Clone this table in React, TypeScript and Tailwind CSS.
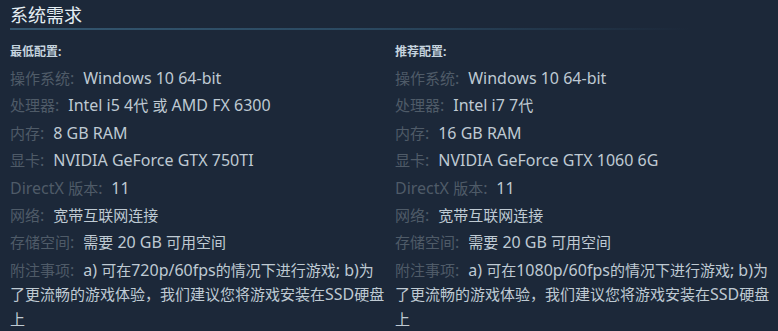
const minimum = [
  ["操作系统:", "Windows 10 64-bit"],
  ["处理器:", "Intel i5 4代 或 AMD FX 6300"],
  ["内存:", "8 GB RAM"],
  ["显卡:", "NVIDIA GeForce GTX 750TI"],
  ["DirectX 版本:", "11"],
  ["网络:", "宽带互联网连接"],
  ["存储空间:", "需要 20 GB 可用空间"],
  ["附注事项:", "a) 可在720p/60fps的情况下进行游戏; b)为了更流畅的游戏体验，我们建议您将游戏安装在SSD硬盘上"],
];

const recommended = [
  ["操作系统:", "Windows 10 64-bit"],
  ["处理器:", "Intel i7 7代"],
  ["内存:", "16 GB RAM"],
  ["显卡:", "NVIDIA GeForce GTX 1060 6G"],
  ["DirectX 版本:", "11"],
  ["网络:", "宽带互联网连接"],
  ["存储空间:", "需要 20 GB 可用空间"],
  ["附注事项:", "a) 可在1080p/60fps的情况下进行游戏; b)为了更流畅的游戏体验，我们建议您将游戏安装在SSD硬盘上"],
];

// latin runs are set a bit larger than the CJK runs, like the Steam font
function Mixed({ text }: { text: string }) {
  const parts = text.split(/([\u3000-\u303f\u4e00-\u9fff\uff00-\uffef]+)/);
  return (
    <>
      {parts.map((p, i) =>
        i % 2 === 1 ? <span key={i}>{p}</span> : <span key={i} className="text-[16px]">{p}</span>
      )}
    </>
  );
}

function Column({ title, rows }: { title: string; rows: string[][] }) {
  return (
    <div className="w-[376px]">
      <div className="text-[12px] font-bold text-[#c6d4df] leading-[14px] mb-[7px]">{title}</div>
      <ul>
        {rows.map(([label, value]) => (
          <li key={label} className="text-[15px] leading-[24.5px] mb-[2.9px]">
            <span className="text-[#4f5b68] mr-[5px]"><Mixed text={label} /></span>{" "}
            <span className="text-[#bfcad3]"><Mixed text={value} /></span>
          </li>
        ))}
      </ul>
    </div>
  );
}

export default function App() {
  return (
    <div
      className="w-[778px] h-[331px] bg-[#1c2839] overflow-hidden pl-[10px] pt-[4px]"
      style={{ fontFamily: '"Noto Sans", "Noto Sans CJK SC", sans-serif' }}
    >
      <h2 className="text-[18px] leading-[22px] text-[#e5eef4]">系统需求</h2>
      <div className="h-[2px] mt-[2px] w-[680px] bg-gradient-to-r from-[#34566f] via-[#2b4a62] to-transparent" />
      <div className="flex gap-[9px] mt-[15px]">
        <Column title="最低配置:" rows={minimum} />
        <Column title="推荐配置:" rows={recommended} />
      </div>
    </div>
  );
}
